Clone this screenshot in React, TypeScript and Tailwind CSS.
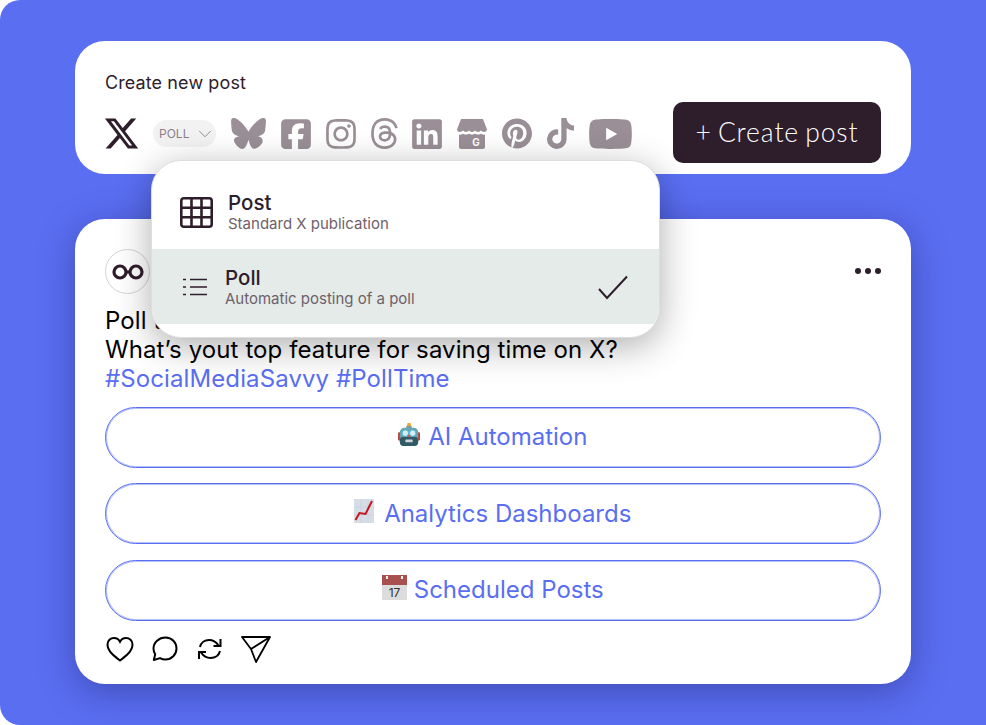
import { ChevronDown } from "lucide-react";
import {
  FaBluesky,
  FaInstagram,
  FaLinkedin,
  FaPinterest,
  FaSquareFacebook,
  FaThreads,
  FaTiktok,
  FaXTwitter,
  FaYoutube,
} from "react-icons/fa6";

const Robot = () => (
  <svg width="22" height="23" viewBox="0 0 24 25">
    <rect x="10" y="0" width="4" height="4" rx="1" fill="#f5a623" />
    <rect x="9" y="3" width="6" height="3" fill="#8a9aa0" />
    <rect x="0" y="10" width="3" height="9" rx="1" fill="#c0453b" />
    <rect x="21" y="10" width="3" height="9" rx="1" fill="#c0453b" />
    <rect x="2" y="5" width="20" height="20" rx="5" fill="#6aa5b0" />
    <rect x="2" y="15" width="20" height="10" rx="4" fill="#2f5a66" />
    <circle cx="8" cy="11" r="3.500" fill="#d5f0f5" stroke="#3fb7d8" />
    <circle cx="16" cy="11" r="3.500" fill="#d5f0f5" stroke="#3fb7d8" />
    <path d="M12 12l2 3h-4z" fill="#d9534f" />
    <rect x="8" y="18" width="8" height="3" rx="1" fill="#cfd8dc" />
  </svg>
);

const Chart = () => (
  <svg width="20" height="24" viewBox="0 0 20 24">
    <rect x="0" y="0" width="20" height="24" fill="#d6dde6" />
    <path d="M0 8h20M0 16h20M7 0v24M14 0v24" stroke="#c4ccd6" strokeWidth="0.600" />
    <path d="M1.500 21l4-7 6 1L18 2" fill="none" stroke="#c8141c" strokeWidth="2" />
  </svg>
);

const Calendar = () => (
  <svg width="25" height="25" viewBox="0 0 25 25">
    <rect x="0" y="0" width="25" height="25" fill="#dcdcdc" />
    <rect x="0" y="0" width="25" height="10" fill="#a8504e" />
    <rect x="4" y="1" width="2" height="3" fill="#eee" />
    <rect x="19" y="1" width="2" height="3" fill="#eee" />
    <text x="12.500" y="21.500" textAnchor="middle" fontSize="12" fill="#333" fontFamily="Inter, sans-serif">
      17
    </text>
  </svg>
);

const Storefront = () => (
  <svg width="30" height="30" viewBox="0 0 30 30" fill="#9a8f96">
    <path d="M4 0h22l4 10.500c0 1.500-1.500 2.500-3 2.500-1.400 0-2.400-.7-3-1.700-.6 1-1.700 1.700-3 1.700s-2.400-.7-3-1.700c-.6 1-1.700 1.700-3 1.700s-2.400-.7-3-1.700c-.6 1-1.700 1.700-3 1.700s-2.400-.7-3-1.700C5.400 12.300 4.400 13 3 13c-1.500 0-3-1-3-2.500z" />
    <path d="M2 15.500c1.800.5 3.400 0 4-1 1.200 1.300 4.800 1.300 6 0 1.200 1.300 4.800 1.300 6 0 1.200 1.300 4.800 1.300 6 0 .6 1 2.200 1.500 4 1V28a2 2 0 0 1-2 2H4a2 2 0 0 1-2-2z" />
    <text x="19" y="27" textAnchor="middle" fontSize="10" fontWeight="700" fill="#fff" fontFamily="Inter, sans-serif">
      G
    </text>
  </svg>
);

const Infinity8 = () => (
  <svg width="32" height="16" viewBox="0 0 32 16" fill="none" stroke="#2e1d2b" strokeWidth="3.200">
    <circle cx="8" cy="8" r="6" />
    <circle cx="24" cy="8" r="6" />
    <path d="M14 8h4" />
  </svg>
);

const TableIcon = () => (
  <svg width="33" height="31" viewBox="0 0 33 31" fill="none" stroke="#2e1d2b" strokeWidth="2.600">
    <rect x="1.300" y="1.300" width="30.400" height="28.400" rx="2.500" />
    <path d="M1.300 10.700h30.400M1.300 20.200h30.400M11.500 1.300v28.400M21.500 1.300v28.400" />
  </svg>
);

const ListIcon = () => (
  <svg width="24" height="18" viewBox="0 0 24 18" fill="none" stroke="#2e1d2b" strokeWidth="1.500">
    <path d="M7 1.500h17M7 9h17M7 16.500h17M0 1.500h3M0 9h3M0 16.500h3" />
  </svg>
);

const Heart = () => (
  <svg width="28" height="26" viewBox="0 0 28 26" fill="none" stroke="#000" strokeWidth="2">
    <path d="M14 24.500C8 20 1.500 15 1.500 8.500 1.500 4.500 4.500 2 8 2c2.600 0 4.800 1.400 6 3.800C15.200 3.400 17.400 2 20 2c3.500 0 6.500 2.500 6.500 6.500 0 6.500-6.500 11.500-12.500 16z" />
  </svg>
);

const Bubble = () => (
  <svg width="26" height="26" viewBox="0 0 26 26" fill="none" stroke="#000" strokeWidth="2">
    <path d="M13.500 1.500c6.400 0 11 4.900 11 11s-4.900 11-11 11c-2 0-3.900-.5-5.500-1.400L1.800 24l1.400-5.700C2.100 16.600 1.500 14.700 1.500 12.500c0-6.100 5.500-11 12-11z" strokeLinejoin="round" />
  </svg>
);

const Repost = () => (
  <svg width="24" height="24" viewBox="0 0 24 24" fill="none" stroke="#000" strokeWidth="2">
    <path d="M2 10c1-4.500 5-7 9-7 4 0 7 1.800 9.500 5.500M22.500 2v7h-7M22 14c-1 4.500-5 7-9.500 7-4 0-7-1.800-9.500-5.500M1 22v-7h7" />
  </svg>
);

const Send = () => (
  <svg width="30" height="27" viewBox="0 0 30 27" fill="none" stroke="#000" strokeWidth="1.800" strokeLinejoin="round">
    <path d="M1 1h28L15 26l-5-13zM10 13L29 1" />
  </svg>
);

const options = [
  { icon: <Robot />, label: "AI Automation", gap: "gap-[8px]" },
  { icon: <Chart />, label: "Analytics Dashboards", gap: "gap-[10px]" },
  { icon: <Calendar />, label: "Scheduled Posts", gap: "gap-[7px]" },
];

const App = () => {
  return (
    <div className="relative w-[986px] h-[725px] overflow-hidden bg-white font-['Inter',sans-serif]">
      <div className="h-[724.500px] w-[985.500px] bg-[#5a6ef2] rounded-l-[20px] pt-[41px] px-[75px]">
        <div className="flex flex-col gap-[45px] w-[835.500px]">
          <div className="relative h-[133px] rounded-[30px] bg-white pt-[32px] px-[30px]">
            <div className="text-[18px] leading-[20px] tracking-[0.1px] text-[#2e1d2b]">Create new post</div>
            <div className="flex items-center mt-[24px] h-[33px] text-[#9a8f96]">
              <FaXTwitter className="shrink-0 text-[#2e1d2b] w-[37px] h-[37px] -ml-[2px]" />
              <div className="shrink-0 ml-[13px] flex items-center justify-between pl-[6px] w-[63px] h-[27px] rounded-full bg-[#f3f2f3] text-[12px] text-[#8c8088]">
                <span>POLL</span>
                <ChevronDown className="w-[22px] h-[22px]" strokeWidth={1} />
              </div>
              <div className="ml-[15px] flex items-center gap-[15px]">
                <div className="w-[35px] flex justify-center"><FaBluesky className="shrink-0 w-[35px] h-[31px]" /></div>
                <div className="w-[30px] flex justify-center"><FaSquareFacebook className="shrink-0 w-[30px] h-[34px]" /></div>
                <div className="w-[30px] flex justify-center"><FaInstagram className="shrink-0 w-[30px] h-[34px]" /></div>
                <div className="w-[26px] flex justify-center"><FaThreads className="shrink-0 w-[31px] h-[33px]" /></div>
                <div className="w-[30px] flex justify-center"><FaLinkedin className="shrink-0 w-[30px] h-[34px]" /></div>
                <div className="w-[30px] flex justify-center"><Storefront /></div>
                <div className="w-[30px] flex justify-center"><FaPinterest className="shrink-0 w-[30px] h-[31px]" /></div>
                <div className="w-[26px] flex justify-center"><FaTiktok className="shrink-0 w-[27px] h-[31px]" /></div>
                <div className="w-[44px] flex justify-center"><FaYoutube className="shrink-0 w-[45px] h-[40px]" /></div>
              </div>
            </div>
            <button className="absolute left-[598px] top-[61px] w-[208px] h-[61px] rounded-[10px] bg-[#2e1d2b] text-white text-[26.500px] font-light font-['Lato',sans-serif] tracking-[0.9px] [word-spacing:-2px]">
              + Create post
            </button>
          </div>

          <div className="relative h-[465px] rounded-[30px] bg-white shadow-[0_8px_36px_rgba(15,15,70,0.35)] pt-[30px] px-[30px]">
            <div className="flex items-start justify-between">
              <div className="w-[45px] h-[45px] rounded-full border border-[#d5d5d5] flex items-center justify-center">
                <Infinity8 />
              </div>
              <div className="flex gap-[4px] mt-[19px]">
                <span className="w-[6px] h-[6px] rounded-full bg-[#2e1d2b]" />
                <span className="w-[6px] h-[6px] rounded-full bg-[#2e1d2b]" />
                <span className="w-[6px] h-[6px] rounded-full bg-[#2e1d2b]" />
              </div>
            </div>
            <div className="mt-[13px] text-[24px] leading-[28.800px] tracking-[0.1px] text-black">
              <div>Poll time</div>
              <div>What’s yout top feature for saving time on X?</div>
              <div className="text-[#5a6ef2]">#SocialMediaSavvy #PollTime</div>
            </div>
            <div className="mt-[13.600px] flex flex-col gap-[15.500px]">
              {options.map((o) => (
                <div
                  key={o.label}
                  className={`h-[61px] rounded-full border border-[#5a6ef2] shadow-[inset_0_0_0_1px_rgba(90,110,242,0.45)] flex items-center justify-center text-[24px] text-[#5a6ef2] ${o.gap}`}
                >
                  <div className="mb-[6px]">{o.icon}</div>
                  <span>{o.label}</span>
                </div>
              ))}
            </div>
            <div className="mt-[15px] flex items-center pl-[1px]">
              <Heart />
              <div className="ml-[18px]"><Bubble /></div>
              <div className="ml-[20px]"><Repost /></div>
              <div className="ml-[19px]"><Send /></div>
            </div>
          </div>
        </div>
      </div>

      <div className="absolute left-[151px] top-[160px] w-[508.500px] h-[178px] rounded-[30px] bg-white overflow-hidden border border-[#dedede] shadow-[0_8px_36px_rgba(0,0,0,0.32)]">
        <div className="flex items-center h-[88px] pl-[28px] pt-[14px]">
          <TableIcon />
          <div className="ml-[15px]">
            <div className="text-[20.500px] leading-[24px] font-medium text-[#2e1d2b]">Post</div>
            <div className="text-[15px] leading-[18px] text-[#6f6169]">Standard X publication</div>
          </div>
        </div>
        <div className="flex items-center h-[75px] bg-[#e4ebe9] pl-[31px] pr-[31px]">
          <ListIcon />
          <div className="ml-[18px]">
            <div className="text-[20.500px] leading-[24px] font-medium text-[#2e1d2b]">Poll</div>
            <div className="text-[15px] leading-[18px] text-[#6f6169]">Automatic posting of a poll</div>
          </div>
          <svg className="ml-auto mt-[2px]" width="30" height="25" viewBox="0 0 30 25" fill="none" stroke="#2e1d2b" strokeWidth="2">
            <path d="M1 14l8 9L29 1.500" />
          </svg>
        </div>
      </div>
    </div>
  );
};

export default App;
